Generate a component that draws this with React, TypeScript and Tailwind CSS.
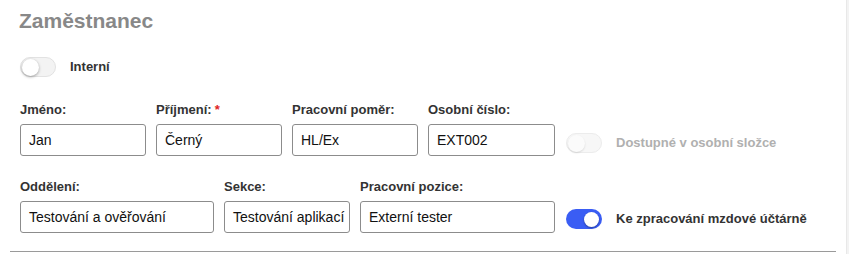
import React from 'react'

interface FieldProps {
  label: string
  value: string
  width: string
  required?: boolean
}

const Field: React.FC<FieldProps> = ({ label, value, width, required }) => (
  <div className={`flex flex-col ${width}`}>
    <label className="text-[13px] leading-4 font-bold text-[#333] mb-[6px] whitespace-nowrap">
      {label}
      {required && <span className="text-[#e02424] ml-[3px]">*</span>}
    </label>
    <div className="h-[32px] border border-[#8c8c8c] rounded-[3px] bg-white pl-2 pr-[3px] flex items-center overflow-hidden">
      <span className="text-[14px] text-[#111] whitespace-nowrap">{value}</span>
    </div>
  </div>
)

interface ToggleProps {
  label: string
  checked?: boolean
  disabled?: boolean
  className?: string
}

const Toggle: React.FC<ToggleProps> = ({ label, checked, disabled, className }) => (
  <div className={`flex items-center ${className ?? ''}`}>
    {checked ? (
      <div className="w-[36px] h-[20px] rounded-full bg-[#3a5df4] flex items-center justify-end pr-[3px]">
        <div className="w-[15px] h-[15px] rounded-full bg-white shadow-[0_1px_2px_rgba(0,0,0,0.35)]" />
      </div>
    ) : (
      <div
        className={`w-[36px] h-[20px] rounded-full border flex items-center pl-[1px] ${
          disabled ? 'bg-[#f7f7f7] border-[#ececec]' : 'bg-[#f3f3f3] border-[#e2e2e2]'
        }`}
      >
        <div
          className={`w-[17px] h-[17px] rounded-full ${
            disabled
              ? 'bg-[#fbfbfb] shadow-[0_1px_2px_rgba(0,0,0,0.12)]'
              : 'bg-white shadow-[0_1px_3px_rgba(0,0,0,0.35)]'
          }`}
        />
      </div>
    )}
    <span
      className={`ml-[14px] text-[13px] font-bold whitespace-nowrap ${
        disabled ? 'text-[#b0b0b0]' : 'text-[#333]'
      }`}
    >
      {label}
    </span>
  </div>
)

export default function App() {
  return (
    <div
      className="w-[849px] h-[254px] bg-white flex overflow-hidden"
      style={{ fontFamily: '"Liberation Sans", Arial, sans-serif' }}
    >
      <div className="w-[846px] h-full px-[10px]">
        <div className="px-[10px] pb-[18px] border-b border-[#9a9a9a]">
          <h2 className="pt-[8px] text-[21px] leading-[26px] font-bold text-[#888] -ml-[1px]">
            Zaměstnanec
          </h2>

          <Toggle label="Interní" className="mt-[23px]" />

          <div className="flex items-end mt-[25px] gap-[10px]">
            <Field label="Jméno:" value="Jan" width="w-[126px]" />
            <Field label="Příjmení:" value="Černý" width="w-[126px]" required />
            <Field label="Pracovní poměr:" value="HL/Ex" width="w-[126px]" />
            <Field label="Osobní číslo:" value="EXT002" width="w-[127px]" />
            <Toggle label="Dostupné v osobní složce" disabled className="ml-[1px] mb-[3px]" />
          </div>

          <div className="flex items-end mt-[23px] gap-[10px]">
            <Field label="Oddělení:" value="Testování a ověřování" width="w-[194px]" />
            <Field label="Sekce:" value="Testování aplikací" width="w-[126px]" />
            <Field label="Pracovní pozice:" value="Externí tester" width="w-[195px]" />
            <Toggle label="Ke zpracování mzdové účtárně" checked className="ml-[1px] mb-[4px]" />
          </div>
        </div>
      </div>
      <div className="w-[3px] h-full bg-[#f3f3f3] border-l border-[#e8e8e8]" />
    </div>
  )
}
